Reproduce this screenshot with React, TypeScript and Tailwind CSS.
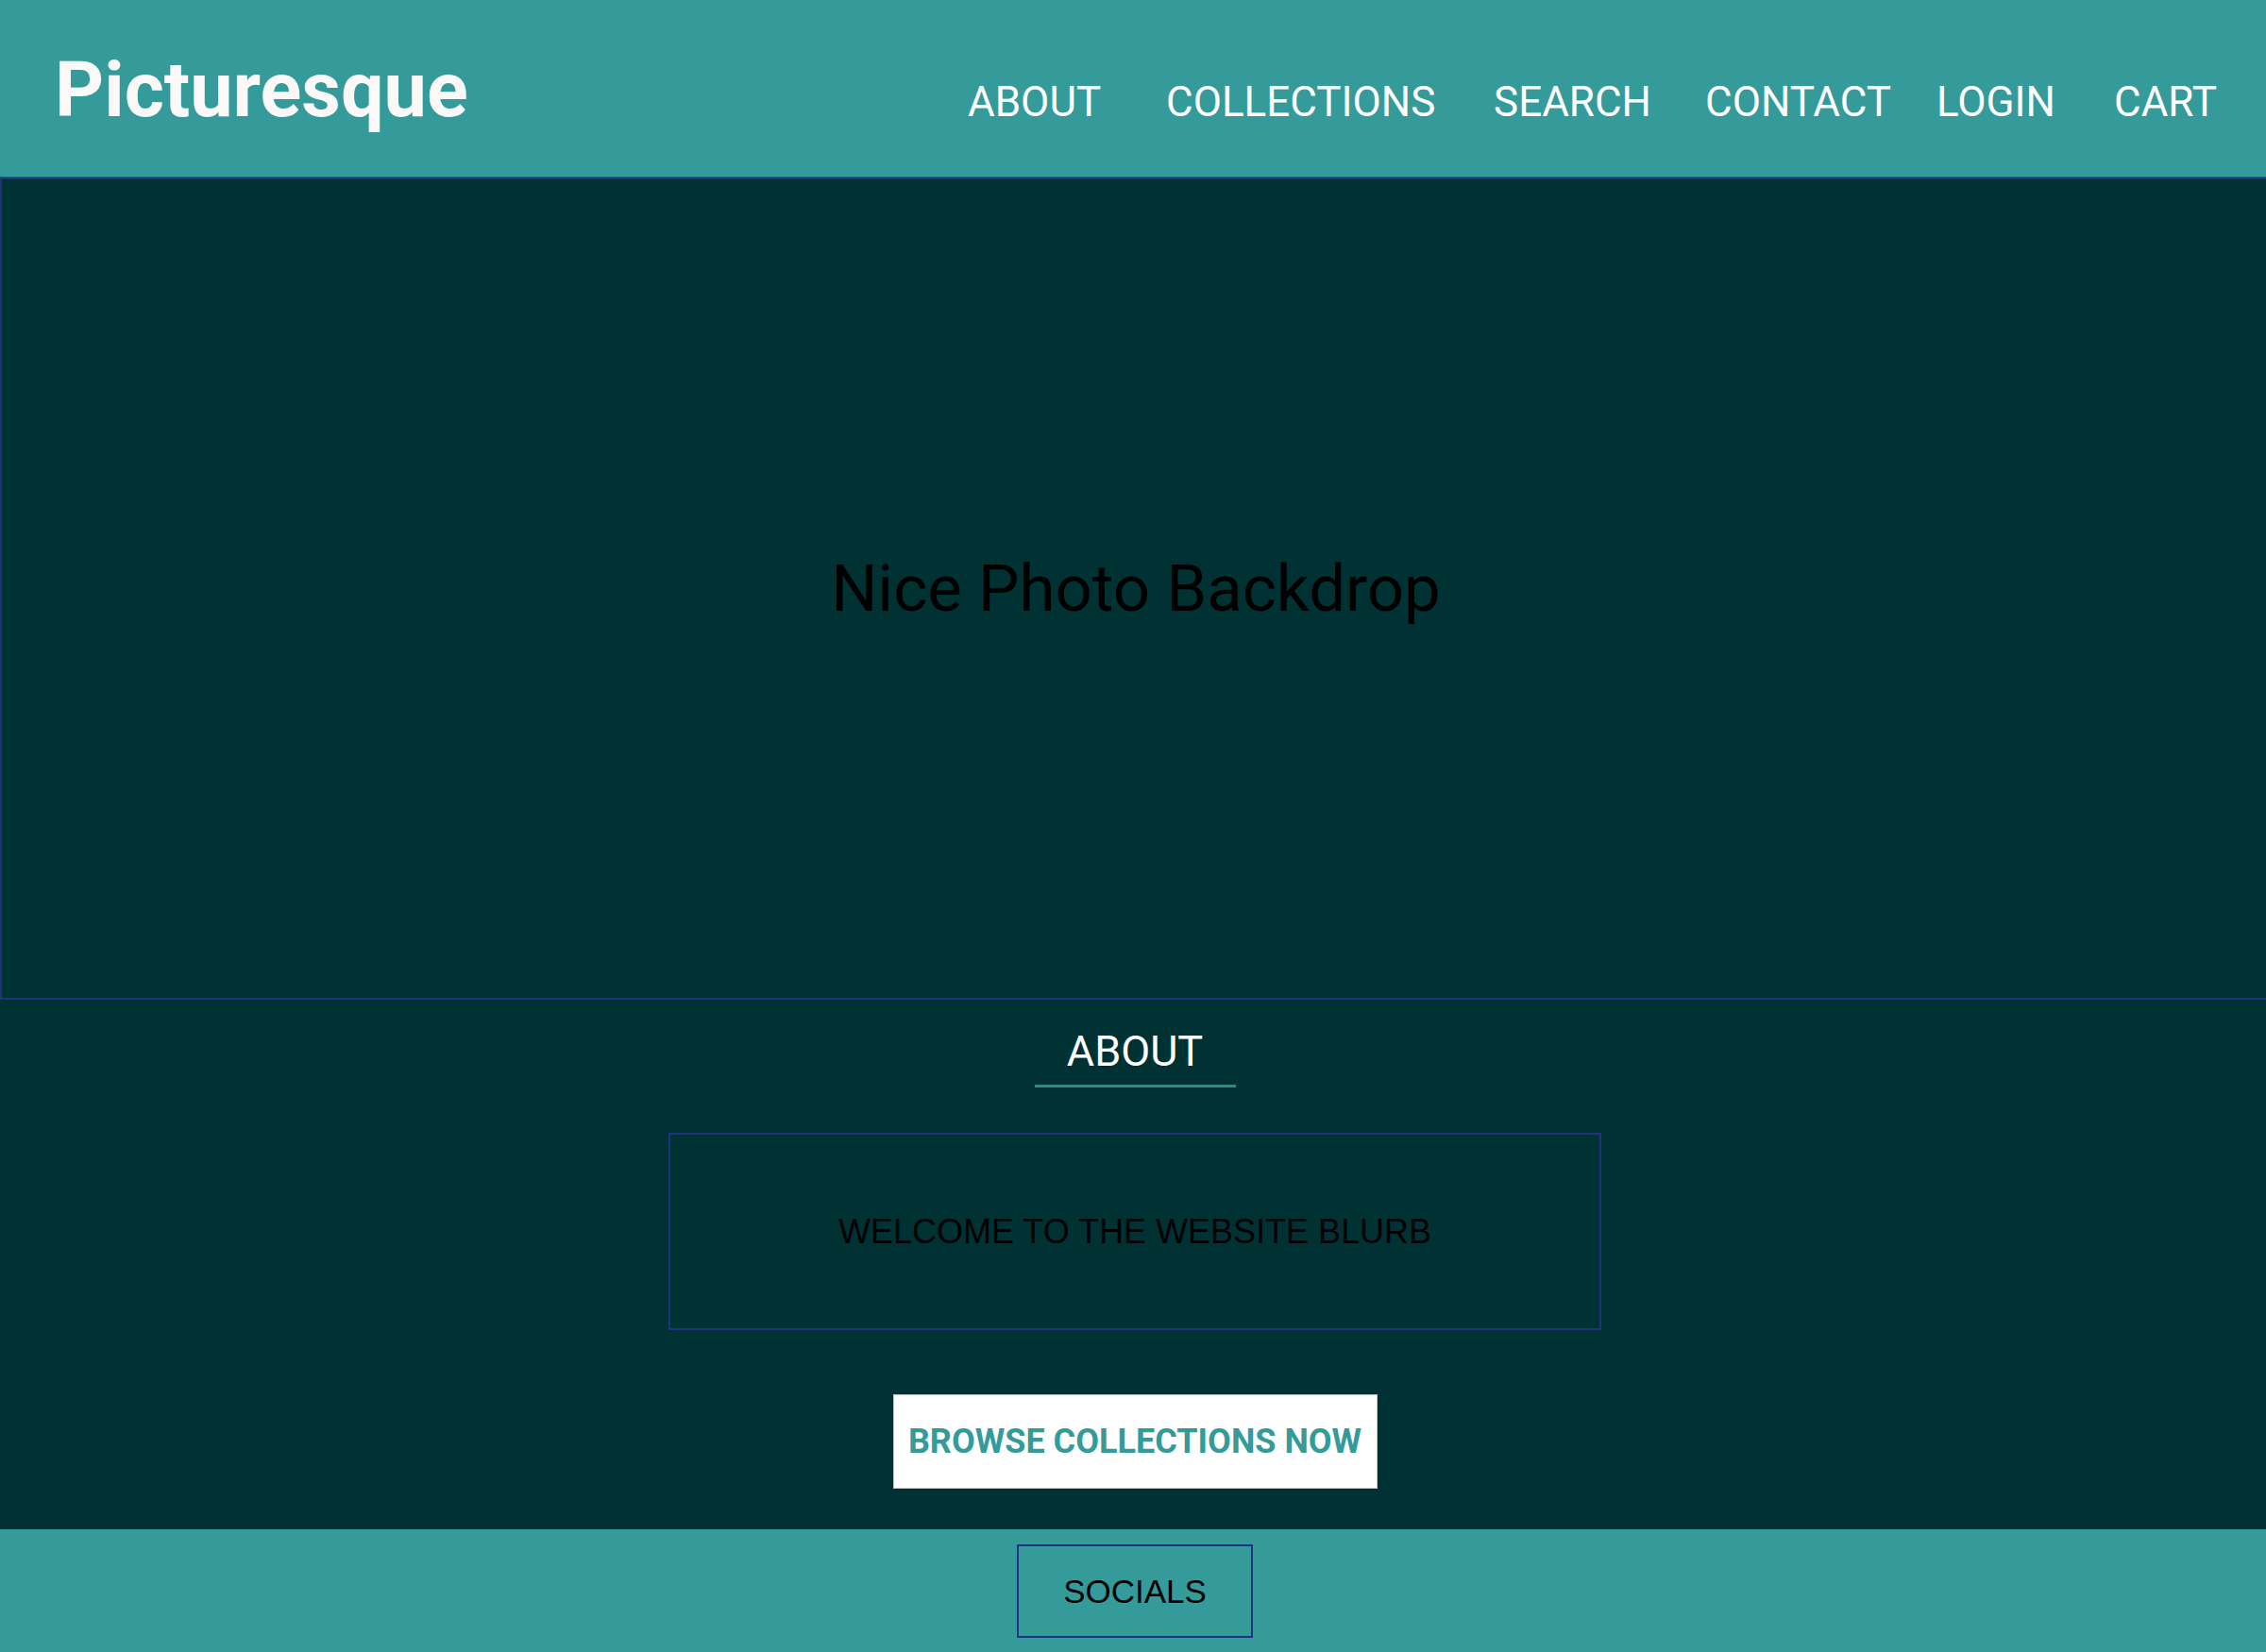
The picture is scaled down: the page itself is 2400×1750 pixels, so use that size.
import React from "react";

const navItems: { label: string; w: string }[] = [
  { label: "ABOUT", w: "w-[210px]" },
  { label: "COLLECTIONS", w: "w-[347px]" },
  { label: "SEARCH", w: "w-[224px]" },
  { label: "CONTACT", w: "w-[245px]" },
  { label: "LOGIN", w: "w-[188px]" },
  { label: "CART", w: "w-[107px]" },
];

export default function App() {
  return (
    <div className="w-full h-[1750px] overflow-hidden bg-[#003234] flex flex-col font-['Roboto',sans-serif]">
      <header className="h-[188px] shrink-0 bg-[#359a9a] border-b border-[#1f6d70] flex items-baseline pt-[55px] pl-[58px] pr-[54px]">
        <div className="text-[81px] leading-none font-bold text-[#fbf9f8]">Picturesque</div>
        <nav className="ml-auto flex items-baseline">
          {navItems.map((n) => (
            <a key={n.label} className={`${n.w} text-[44px] leading-none text-white`} href="#">
              {n.label}
            </a>
          ))}
        </nav>
      </header>

      <section className="h-[871px] shrink-0 border-2 border-r-0 border-[#1f3380] bg-[#003234] flex items-center justify-center pl-[4px]">
        <h1 className="text-[69px] leading-none text-black font-normal">Nice Photo Backdrop</h1>
      </section>

      <main className="flex flex-col items-center pt-[32px] pb-[43px] pl-[4px] bg-[#003234] shrink-0">
        <h2 className="w-[213px] text-center text-[45px] leading-none text-white pb-[13px] border-b-[3px] border-[#2b8a86]">
          ABOUT
        </h2>
        <div className="mt-[48px] w-[988px] h-[209px] border-2 border-[#1f3380] flex items-center justify-center">
          <p className="font-['Liberation_Sans',Arial,sans-serif] text-[36px] leading-none text-black">
            WELCOME TO THE WEBSITE BLURB
          </p>
        </div>
        <button className="mt-[68px] w-[513px] h-[100px] bg-white border border-[#c8c8c8] flex items-center justify-center">
          <span className="text-[36px] leading-none font-bold text-[#359a9a]">BROWSE COLLECTIONS NOW</span>
        </button>
      </main>

      <footer className="flex-1 bg-[#359a9a] flex justify-center pt-[16px] pl-[4px]">
        <div className="w-[250px] h-[99px] border-2 border-[#1f3380] flex items-center justify-center">
          <span className="font-['Liberation_Sans',Arial,sans-serif] text-[35px] leading-none text-black">SOCIALS</span>
        </div>
      </footer>
    </div>
  );
}
